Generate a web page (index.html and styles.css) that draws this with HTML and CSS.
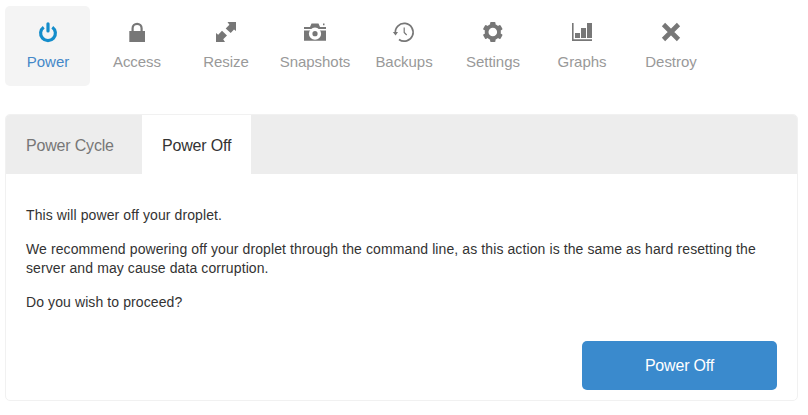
FILE: index.html
```
<!DOCTYPE html>
<html lang="en">
<head>
<meta charset="utf-8">
<title>Droplet power</title>
<link rel="stylesheet" href="styles.css">
</head>
<body>
<nav class="actions">
  <a class="action active"><svg class="icon" viewBox="0 0 25 24"><path d="M8.700 7.200A7.400 7.400 0 1 0 17.300 7.200" fill="none" stroke="currentColor" stroke-width="3.200"/><path d="M13 3.800V11" stroke="currentColor" stroke-width="3.200" stroke-linecap="round"/></svg><span>Power</span></a>
  <a class="action"><svg class="icon" viewBox="0 0 25 24"><path d="M5.300 11H21v11H5.300z"/><path d="M8.600 11.500V8.300a4.500 4.500 0 0 1 9 0v3.200" fill="none" stroke="currentColor" stroke-width="2.200"/></svg><span>Access</span></a>
  <a class="action"><svg class="icon" viewBox="0 0 25 24"><path d="M14.500 2H23v9l-2-1.600-3.300 3.600-5-4.600 3.700-3.600zM3 13l2.200 1.800 3.800-4.100 5 4.900-3.800 3.700L12 22H3z"/></svg><span>Resize</span></a>
  <a class="action"><svg class="icon" viewBox="0 0 25 24"><path d="M2 7h6l1.500-3.500h7L18 7h6v2H2zM21 3.500h1.500v1.800H21zM2 10.500h22v10.200H2z"/><circle cx="13" cy="13.700" r="6.100" class="cutout"/><circle cx="13" cy="13.700" r="2.600"/></svg><span>Snapshots</span></a>
  <a class="action"><svg class="icon" viewBox="0 0 25 24"><path d="M4.400 13.500A8.900 8.900 0 1 1 8 19.500" fill="none" stroke="currentColor" stroke-width="1.700"/><path d="M1.800 12h5.200l-2.400 3.400z"/><path d="M13.200 7.500v5l2.500 2.500" fill="none" stroke="currentColor" stroke-width="1.200"/></svg><span>Backups</span></a>
  <a class="action"><svg class="icon" viewBox="0 0 25 24"><g transform="translate(12.800 12)"><circle r="6.200" fill="none" stroke="currentColor" stroke-width="3.800"/><rect id="tooth" x="-2.700" y="-10" width="5.400" height="4" rx="1"/><use href="#tooth" transform="rotate(60)"/><use href="#tooth" transform="rotate(120)"/><use href="#tooth" transform="rotate(180)"/><use href="#tooth" transform="rotate(240)"/><use href="#tooth" transform="rotate(300)"/></g></svg><span>Settings</span></a>
  <a class="action"><svg class="icon" viewBox="0 0 25 24"><path d="M3 3h1.600v16.200H23V21H3zM6 13h5v5H6zM12 8h5v10h-5zM18 3h5v15h-5z"/></svg><span>Graphs</span></a>
  <a class="action"><svg class="icon" viewBox="0 0 25 24"><path d="M5.500 4.500L20.500 19.500M20.500 4.500L5.500 19.500" stroke="currentColor" stroke-width="4.600"/></svg><span>Destroy</span></a>
</nav>
<main class="panel">
  <div class="tabs">
    <a class="tab">Power Cycle</a>
    <a class="tab selected">Power Off</a>
  </div>
  <div class="content">
    <p>This will power off your droplet.</p>
    <p>We recommend powering off your droplet through the command line, as this action is the same as hard resetting the server and may cause data corruption.</p>
    <p>Do you wish to proceed?</p>
    <button class="submit">Power Off</button>
  </div>
</main>
</body>
</html>
```
FILE: styles.css
```
* { box-sizing: border-box; }
body {
  margin: 0;
  padding: 6px 10px 0 5px;
  background: #fff;
  color: #333;
  font-family: "Liberation Sans", Arial, sans-serif;
  font-size: 14px;
}
.actions { display: flex; gap: 4px; }
.action {
  width: 85px;
  height: 80px;
  padding-top: 14px;
  display: flex;
  flex-direction: column;
  align-items: center;
  border-radius: 5px;
  color: #999;
  font-size: 15px;
  line-height: 18px;
}
.action span { margin: 9px 0 0 1px; letter-spacing: -0.05px; }
.icon { width: 25px; height: 24px; flex: none; fill: currentColor; color: #777; }
.cutout { fill: #fff; }
.action.active { background: #f4f4f4; color: #4488c8; }
.active .icon { color: #148dcb; }
.panel {
  margin-top: 28px;
  height: 287px;
  border: 1px solid #f1f1f1;
  border-radius: 5px;
  overflow: hidden;
}
.tabs { display: flex; height: 59px; background: #ededed; }
.tab {
  padding: 0 20px;
  width: 136px;
  font-size: 16px;
  line-height: 61px;
  letter-spacing: -0.18px;
  color: #777;
  white-space: nowrap;
}
.tab.selected { width: 109px; background: #fff; color: #333; }
.content {
  height: 226px;
  padding: 32px 20px 10px;
  display: flex;
  flex-direction: column;
}
.content p { margin: 0 0 15px; line-height: 19px; letter-spacing: 0.1px; }
.submit {
  width: 195px;
  height: 49px;
  margin: auto 0 0 auto;
  border: 0;
  border-radius: 5px;
  background: #3a8acd;
  color: #fff;
  font: 16px "Liberation Sans", Arial, sans-serif;
  letter-spacing: -0.18px;
}
```
